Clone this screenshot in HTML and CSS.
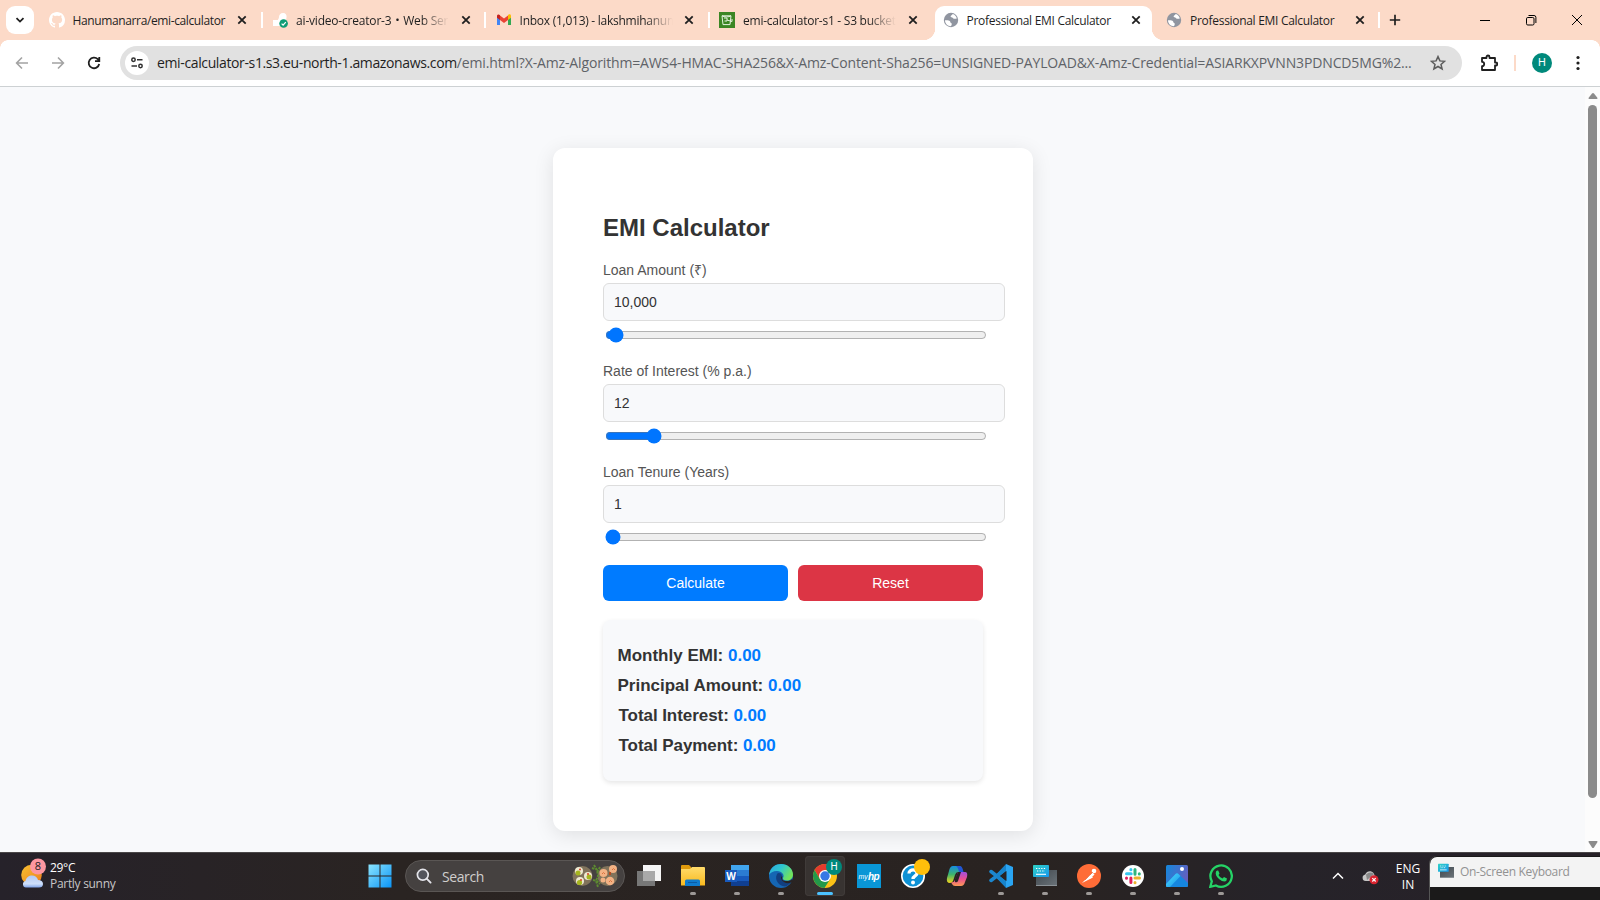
FILE: index.html
```html
<!DOCTYPE html>
<html lang="en">
<head>
<meta charset="utf-8">
<title>Professional EMI Calculator</title>
<link rel="stylesheet" href="styles.css">
</head>
<body>
<svg class="defs" width="0" height="0">
  <defs>
    <symbol id="x" viewBox="0 0 10 10"><path d="M1.3 1.3l7.4 7.4M8.7 1.3L1.3 8.7" stroke="#1f1f1f" stroke-width="1.8" fill="none"/></symbol>
    <symbol id="globe" viewBox="0 0 16 16"><circle cx="8" cy="8" r="7.2" fill="#9095a0"/><path d="M2 8.2c2 0 4.200-.2 5 1 .7 1 .2 1.900 1.600 2.100.4 1-.1 2-.6 2.900C4.500 14 2 11.500 2 8.200zM7 2.200l2.600-.3c-.2 1.300-1.900 1.200-2 2.300-.1 1.200 1.700.8 2.300 1.800.6.9 2 1 3.900.6-.3-2.300-2-4.200-4.200-4.700z" fill="#fff"/></symbol>
    <linearGradient id="win" x1="0" y1="0" x2="1" y2="1"><stop offset="0" stop-color="#8be5ff"/><stop offset="1" stop-color="#0a94f6"/></linearGradient>
    <linearGradient id="edge" x1="0" y1="0" x2="1" y2=".5"><stop offset="0" stop-color="#2da5e0"/><stop offset=".5" stop-color="#2ec6cf"/><stop offset="1" stop-color="#72e35b"/></linearGradient>
    <linearGradient id="sun" x1="0" y1="0" x2="1" y2="1"><stop offset="0" stop-color="#f7c331"/><stop offset="1" stop-color="#ee7a1c"/></linearGradient>
    <linearGradient id="cloud" x1="0" y1="0" x2="0" y2="1"><stop offset="0" stop-color="#b2c9f5"/><stop offset=".7" stop-color="#cfdffa"/><stop offset="1" stop-color="#7fa4ea"/></linearGradient>
    <linearGradient id="fold" x1="0" y1="0" x2="0" y2="1"><stop offset="0" stop-color="#ffdb6b"/><stop offset="1" stop-color="#f9b91e"/></linearGradient>
    <linearGradient id="copA" x1="0" y1="0" x2="0" y2="1"><stop offset="0" stop-color="#168ee0"/><stop offset=".5" stop-color="#3fb56c"/><stop offset="1" stop-color="#f2d51b"/></linearGradient>
    <linearGradient id="copB" x1="0" y1="0" x2="0" y2="1"><stop offset="0" stop-color="#a04fe0"/><stop offset=".5" stop-color="#ea4f91"/><stop offset="1" stop-color="#fb9b55"/></linearGradient>
    <linearGradient id="pho" x1="0" y1="0" x2="1" y2=".4"><stop offset="0" stop-color="#1388dc"/><stop offset="1" stop-color="#6260c0"/></linearGradient>
    <linearGradient id="mount" x1="0" y1="0" x2="1" y2="1"><stop offset="0" stop-color="#4fe0ff"/><stop offset="1" stop-color="#1590e8"/></linearGradient>
    <linearGradient id="kb" x1="0" y1="0" x2="1" y2="1"><stop offset="0" stop-color="#2fd3c4"/><stop offset="1" stop-color="#1796ee"/></linearGradient>
    <linearGradient id="kbb" x1="0" y1="0" x2="1" y2="1"><stop offset="0" stop-color="#40474d"/><stop offset="1" stop-color="#6b7379"/></linearGradient>
    <symbol id="osk" viewBox="0 0 24 24"><path d="M3 6h21v16H3z" fill="url(#kbb)"/><path d="M3 21h21v1H3z" fill="#8b9297"/><rect width="16" height="12" rx=".8" y="1" fill="url(#kb)"/><path d="M3 4.500h10M4 7h8" stroke="#fff" stroke-width="1.200" stroke-dasharray="1.300 1.300"/><path d="M3 10.300h10" stroke="#fff" stroke-width="1.100"/></symbol>
  </defs>
</svg>

<header class="tabstrip">
  <div class="search-tabs"><svg width="10" height="10" viewBox="0 0 10 10"><path d="M1.500 3.200L5 6.600l3.500-3.400" fill="none" stroke="#1f1f1f" stroke-width="1.800"/></svg></div>
  <div class="tab sep">
    <svg class="fav" viewBox="0 0 16 16"><path fill="#fff" d="M8 0C3.580 0 0 3.580 0 8c0 3.540 2.290 6.530 5.470 7.590.4.070.55-.17.55-.38v-1.490c-2.010.37-2.530-.49-2.690-.94-.09-.23-.48-.94-.82-1.130-.28-.15-.68-.52-.01-.53.63-.01 1.080.58 1.230.82.72 1.210 1.870.87 2.330.66.07-.52.28-.87.510-1.070-1.780-.2-3.640-.89-3.640-3.950 0-.87.310-1.590.82-2.150-.08-.2-.36-1.020.08-2.120 0 0 .67-.21 2.200.82.640-.18 1.320-.27 2-.27s1.360.09 2 .27c1.530-1.040 2.200-.82 2.200-.82.440 1.100.16 1.920.08 2.120.510.560.82 1.270.82 2.150 0 3.070-1.870 3.750-3.650 3.950.290.250.540.730.540 1.480v2.200c0 .21.150.46.550.38A8 8 0 0 0 16 8c0-4.420-3.580-8-8-8z"/></svg>
    <span class="title t1">Hanumanarra/emi-calculator</span><svg class="close"><use href="#x"/></svg>
  </div>
  <div class="tab sep">
    <svg class="fav" viewBox="0 0 16 16"><path fill="#fff" d="M1 14V8h5c0-1 1-1.500 1-3 0-2 1.500-4 4-4s4 2 3.500 4.500L13 14z"/><circle cx="11.600" cy="11.500" r="4.300" fill="#0f9d76"/><path d="M9.600 11.600l1.500 1.500 2.700-3" fill="none" stroke="#fff" stroke-width="1.200"/></svg>
    <span class="title t2 fade">ai-video-creator-3・Web Ser</span><svg class="close"><use href="#x"/></svg>
  </div>
  <div class="tab sep">
    <svg class="fav" viewBox="0 0 16 16"><path d="M1 4v9h3V7z" fill="#4285f4"/><path d="M12 7v6h3V4z" fill="#34a853"/><path d="M12 4v4l3-2.200V4c0-1.700-1.800-2.200-3-1z" fill="#fbbc04"/><path d="M4 3.500l4 3 4-3V8l-4 3-4-3z" fill="#ea4335"/><path d="M1 4v1.800L4 8V3.200C2.800 2 1 2.500 1 4z" fill="#c5221f"/></svg>
    <span class="title t3 fade">Inbox (1,013) - lakshmihanum</span><svg class="close"><use href="#x"/></svg>
  </div>
  <div class="tab">
    <svg class="fav" viewBox="0 0 16 16"><path fill="#3c8624" d="M0 0h16v16H0z"/><path d="M3 3.800h9l-1 8.800H4zM3 3.800c2 1.500 7 1.500 9 0M8 8l5 1.500V7M5 6h3v3H5.500" fill="none" stroke="#e5f3df" stroke-width="1"/></svg>
    <span class="title t4 fade">emi-calculator-s1 - S3 bucket</span><svg class="close"><use href="#x"/></svg>
  </div>
  <div class="tab active"><svg class="fav"><use href="#globe"/></svg><span class="title t5">Professional EMI Calculator</span><svg class="close"><use href="#x"/></svg></div>
  <div class="tab sep"><svg class="fav"><use href="#globe"/></svg><span class="title t5">Professional EMI Calculator</span><svg class="close"><use href="#x"/></svg></div>
  <svg class="plus" width="12" height="12" viewBox="0 0 12 12"><path d="M6 .8v10.400M.8 6h10.400" stroke="#1f1f1f" stroke-width="1.700"/></svg>
  <div class="winctl">
    <svg width="12" height="12" viewBox="0 0 12 12"><path d="M1 6.500h10" stroke="#000"/></svg>
    <svg width="12" height="12" viewBox="0 0 12 12"><rect x="1.500" y="3.500" width="7.500" height="7.500" rx="1.300" fill="none" stroke="#000"/><path d="M3.500 1.500H9A1.900 1.900 0 0 1 10.900 3.400V9" fill="none" stroke="#000"/></svg>
    <svg width="12" height="12" viewBox="0 0 12 12"><path d="M1 1l10 10M11 1L1 11" stroke="#000"/></svg>
  </div>
</header>

<nav class="toolbar">
  <svg class="nav" viewBox="0 0 16 16"><path d="M14 8H3M8 2.500L2.600 8 8 13.500" fill="none" stroke="#a3a3a3" stroke-width="1.600"/></svg>
  <svg class="nav" viewBox="0 0 16 16"><path d="M2 8h11M8 2.500L13.400 8 8 13.500" fill="none" stroke="#a3a3a3" stroke-width="1.600"/></svg>
  <svg class="nav" viewBox="0 0 16 16"><path d="M13.200 9A5.300 5.300 0 1 1 11.800 4.200L13.300 5.700M13.300 2v4.200H9" fill="none" stroke="#1f1f1f" stroke-width="1.800"/></svg>
  <div class="omnibox">
    <div class="site"><svg width="14" height="14" viewBox="0 0 14 14"><g fill="none" stroke="#303030" stroke-width="1.500"><circle cx="3.500" cy="3.800" r="1.700"/><path d="M7 3.800h5.500M1.500 10h5.500"/><circle cx="10.500" cy="10" r="1.700"/></g></svg></div>
    <div class="url"><span class="host">emi-calculator-s1.s3.eu-north-1.amazonaws.com</span><span class="path">/emi.html?X-Amz-Algorithm=AWS4-HMAC-SHA256&amp;X-Amz-Content-Sha256=UNSIGNED-PAYLOAD&amp;X-Amz-Credential=ASIARKXPVNN3PDNCD5MG%2...</span></div>
    <svg class="star" viewBox="0 0 16 16"><path d="M8 1.600l1.900 4.300 4.700.4-3.600 3.100 1.100 4.600L8 11.500 3.900 14 5 9.400 1.400 6.300l4.700-.4z" fill="none" stroke="#5c5c5c" stroke-width="1.500"/></svg>
  </div>
  <svg class="puzzle" viewBox="0 0 18 18"><path d="M2 4h4.500V3a1.500 1.500 0 0 1 3 0v1H15v4.500h.8a1.500 1.500 0 0 1 0 3H15V16H2v-3.800a2.200 2.200 0 0 0 0-4.400z" fill="none" stroke="#1f1f1f" stroke-width="1.800" stroke-linejoin="round"/></svg>
  <i class="bar"></i>
  <div class="avatar">H</div>
  <svg class="dots" width="4" height="16" viewBox="0 0 4 16"><g fill="#1f1f1f"><circle cx="2" cy="2.500" r="1.600"/><circle cx="2" cy="8" r="1.600"/><circle cx="2" cy="13.500" r="1.600"/></g></svg>
</nav>

<main class="page">
  <div class="content">
    <section class="card">
      <h2>EMI Calculator</h2>
      <div class="group"><label>Loan Amount (₹)</label><input class="text" type="text" value="10,000"><input class="range" type="range" min="1000" max="1000000" value="10000"></div>
      <div class="group"><label>Rate of Interest (% p.a.)</label><input class="text" type="text" value="12"><input class="range" type="range" min="1" max="100" value="12"></div>
      <div class="group"><label>Loan Tenure (Years)</label><input class="text" type="text" value="1"><input class="range" type="range" min="1" max="30" value="1"></div>
      <div class="buttons"><button class="calc">Calculate</button><button class="reset">Reset</button></div>
      <div class="result">
        <p>Monthly EMI: <span>0.00</span></p>
        <p>Principal Amount: <span>0.00</span></p>
        <p class="total">Total Interest: <span>0.00</span></p>
        <p class="total">Total Payment: <span>0.00</span></p>
      </div>
    </section>
  </div>
  <div class="scroll">
    <svg width="10" height="6" viewBox="0 0 10 6"><path d="M4 .6Q5-.4 6 .6L9.500 5Q9.700 6 8.700 6H1.300Q.3 6 .5 5z" fill="#8b8b8b"/></svg>
    <div class="thumb"></div>
    <svg width="10" height="7" viewBox="0 0 10 7"><path d="M4 6.400Q5 7.400 6 6.400L9.500 1Q9.700 0 8.700 0H1.300Q.3 0 .5 1z" fill="#8b8b8b"/></svg>
  </div>
</main>

<footer class="taskbar">
  <div class="weather">
    <svg width="26" height="31" viewBox="0 0 26 31"><circle cx="10.500" cy="17" r="10.300" fill="url(#sun)"/><path d="M5 29.500a3.300 3.300 0 0 1-.5-6.500C5 19.500 8 17.500 11 17.500s5.500 2 6 4.500c3 0 5 1.600 5 4s-1.500 3.500-4 3.500z" fill="url(#cloud)"/><circle cx="17" cy="8.500" r="8" fill="#fd97a1"/><text x="17" y="12.300" text-anchor="middle" class="count">8</text></svg>
    <div class="wtext"><div>29°C</div><div class="sunny">Partly sunny</div></div>
  </div>
  <div class="apps">
    <div class="start"><svg width="24" height="24" viewBox="0 0 24 24"><path d="M.5.500h11v11H.5zM12.500.500h11v11h-11zM.5 12.500h11v11H.5zM12.500 12.500h11v11h-11z" fill="url(#win)"/></svg></div>
    <div class="search">
      <svg width="16" height="16" viewBox="0 0 16 16"><circle cx="6.800" cy="6.800" r="5.400" fill="#53545c" stroke="#e4e4ea" stroke-width="1.700"/><path d="M10.700 10.700l3.900 3.900" stroke="#e4e4ea" stroke-width="1.900" stroke-linecap="round"/></svg>
      <span>Search</span>
      <svg class="food" width="46" height="26" viewBox="0 0 46 26"><circle cx="10.500" cy="13" r="10" fill="#81735b"/><circle cx="35.500" cy="13" r="10" fill="#81735b"/><g fill="#eee9d1"><circle cx="7" cy="8" r="4"/><circle cx="16" cy="13" r="4"/><circle cx="8" cy="18" r="4"/></g><g fill="#a5b51f"><circle cx="6" cy="10" r="2.500"/><circle cx="17" cy="14" r="2.500"/><circle cx="7.500" cy="19.500" r="2.600"/></g><g fill="#d64022"><circle cx="8" cy="6.500" r="1"/><circle cx="16" cy="11" r="1"/><circle cx="9" cy="17" r="1"/></g><path d="M22 2l3 5 1 6-2 5 2 6M20 5l6 2M28 4l-3 6M21 17l4 1 3 3" stroke="#5d8b30" stroke-width="1.900" stroke-dasharray="2.500 1" fill="none"/><g fill="#f3b284"><circle cx="31.500" cy="10" r="4"/><circle cx="41" cy="6" r="4"/><circle cx="38" cy="18" r="4.300"/><circle cx="31" cy="17" r="2.500"/></g><g fill="none" stroke="#d9713f"><path d="M30 11l1.500-1.500L33 11M40 7l1.500-1.500L43 7M37 19l1.500-1.500L40 19"/><path d="M38 12v-3" stroke="#b54a1d" stroke-width="2"/></g></svg>
    </div>
    <div class="app"><svg viewBox="0 0 24 24"><path d="M6 1h18v16H6z" fill="#f5f5f5"/><path d="M0 7h18v15H0z" fill="#777"/><path d="M6 7h12v10H6z" fill="#a9a9a9"/></svg></div>
    <div class="app run"><svg viewBox="0 0 24 24"><path d="M0 2q0-1 1-1h7l2 2v3H0z" fill="#e09a0c"/><path d="M0 5h9l2-2h12q1 0 1 1v17.500H0z" fill="url(#fold)"/><path d="M4 22v-5q0-1.500 1.500-1.500h12q1.500 0 1.500 1.500v5z" fill="#0f7bcd"/><path d="M7 18.500h9" stroke="#0a5ba5"/></svg></div>
    <div class="app run"><svg viewBox="0 0 24 24"><path d="M6 1h18v5H6z" fill="#41a5ee"/><path d="M6 6h18v6H6z" fill="#2b7cd3"/><path d="M6 12h18v5H6z" fill="#185abd"/><path d="M6 17h18v5H6z" fill="#103f91"/><path d="M0 6h12v12H0z" fill="#185abd"/><text x="6" y="15.500" text-anchor="middle" class="word">W</text></svg></div>
    <div class="app run"><svg viewBox="0 0 24 24"><circle cx="12" cy="12" r="12" fill="#1566b3"/><path d="M0 11C1 3 7 0 12 0c7 0 12 5 12 10.500 0 4-3 6-6 6s-4.500-1-4-2.500c2-3-1-7-6-7-4 0-7 2-8 4z" fill="url(#edge)"/><path d="M8 10c-3 6 2 12 8 12.500 2-.4 5-2.500 6-4.500-6 2.500-11-1-9-6 0-3-4-4-5-2z" fill="#123f80"/><path d="M13.500 12c-1 3 0 5 4 5 2.500 0 4.500-.5 5.500-2l1 1.500-1.500 1.800C17 21 11.500 17 12 13z" fill="#282323"/></svg></div>
    <div class="app run current"><svg viewBox="0 0 24 24"><circle cx="12" cy="12" r="12" fill="#fbc116"/><path d="M1.600 6A12 12 0 0 1 22.400 6H12L6.800 15z" fill="#e33b2e"/><path d="M1.600 6A12 12 0 0 0 11.500 24L17.200 15H6.800z" fill="#23994a"/><circle cx="12" cy="12" r="6" fill="#fff"/><circle cx="12" cy="12" r="4.700" fill="#3578e5"/></svg><b class="badge">H</b></div>
    <div class="app"><svg viewBox="0 0 24 24"><path fill="#0996d6" d="M0 0h24v24H0z"/><text x="1.500" y="14.500" class="my">my</text><text x="11" y="15.500" class="hp">hp</text></svg></div>
    <div class="app"><svg viewBox="0 0 24 24"><circle cx="12" cy="12" r="11.200" fill="#0d91d5" stroke="#fff" stroke-width="1.600"/><path d="M8 9.500C8 4.500 16.500 5 16 9.500c-.3 2.500-4 2.500-4 5.500" fill="none" stroke="#fff" stroke-width="3.300"/><circle cx="12" cy="18.500" r="2" fill="#fff"/></svg><b class="badge yellow"></b></div>
    <div class="app"><svg viewBox="0 0 24 24"><path d="M8 2h6q2 0 3 3l1 3h-5q-2 0-3 3l-2 6q-1 2-3 2-4 0-3-5L4 7q1-5 4-5z" fill="url(#copA)"/><path d="M11 2h4q2 0 3 4l.5 2H14q-1-5-3-6z" fill="#2156d4"/><path d="M16 22h-6q-2 0-3-2l-1-2q3 1 4-2l3-8h7q3 0 2 5l-2 5q-1 4-4 4z" fill="url(#copB)"/><path d="M10 15l3-7h3l-3 9q-1 2-3 1z" fill="#282323"/></svg></div>
    <div class="app run"><svg viewBox="0 0 24 24"><path d="M2 7.500L18 20M2 16.500L18 4" stroke="#1c87cf" stroke-width="3.500" stroke-linecap="round"/><path d="M17 0l7 3v18l-7 3z" fill="#2aa5f2"/><path d="M17 0v7l-6 5 6 5v7L8 14.500v-5z" fill="#1784cc"/><path d="M17.500 7v10L11 12z" fill="#282323"/></svg></div>
    <div class="app run"><svg><use href="#osk"/></svg></div>
    <div class="app run"><svg viewBox="0 0 24 24"><circle cx="12" cy="12" r="12" fill="#ff6c37"/><path d="M5 19l8-8 3 2.500z" fill="#fff"/><path d="M11.500 12.500l4-4 2 2-4 4z" fill="#fff"/><circle cx="17" cy="7" r="2.300" fill="#fff"/><path d="M8 16l8-8" stroke="#d95a2d" stroke-width=".6"/></svg></div>
    <div class="app run"><svg viewBox="0 0 24 24"><circle cx="12" cy="12" r="11" fill="#fff"/><g stroke-width="3" stroke-linecap="round"><path d="M5.500 9.700h4.700M9.900 5.500v.2" stroke="#36c5f0"/><path d="M14 5.500v4.700M18.300 9.700v.2" stroke="#2eb67d"/><path d="M9.900 14v4.500M5.500 14v.2" stroke="#e01e5a"/><path d="M14 14h4.500M14 18.500v.2" stroke="#ecb22e"/></g></svg></div>
    <div class="app run"><svg viewBox="0 0 24 24"><rect x="1" y="1" width="22" height="22" rx="1.500" fill="url(#pho)"/><path d="M1 20l9.500-10q1.500-1.500 3 0L23 19v2.500q0 1.500-1.500 1.500h-19Q1 23 1 21.500z" fill="#1686df"/><path d="M1 20l9.500-10q1.500-1.500 3 0l2 2L5 23H2.500Q1 23 1 21.500z" fill="url(#mount)"/><circle cx="17" cy="5" r="2" fill="#fff"/></svg></div>
    <div class="app run"><svg viewBox="0 0 24 24"><path d="M1.300 22.800l1.500-5.500A10.700 10.700 0 1 1 6.900 21.400z" fill="none" stroke="#25d366" stroke-width="2.300"/><path d="M7 7.500q1-1.500 2.200-1l1.300 3-1 1.500q1.300 2.600 4 3.600l1.500-1.500 3 1.400q0 2.500-2.500 3-2.500 0-5.500-2.500C7.500 13 6 10 7 7.500z" fill="#25d366"/></svg></div>
  </div>
  <div class="tray">
    <svg width="12" height="8" viewBox="0 0 12 8"><path d="M1 6.500l5-5 5 5" fill="none" stroke="#fff" stroke-width="1.500"/></svg>
    <svg width="17" height="15" viewBox="0 0 17 15"><path d="M3.500 11a3.300 3.300 0 0 1-.3-6.500C4.500 1 9 0 11.500 3L13 6l-5 5z" fill="#c5c5c5"/><path d="M4 4.500Q8 1 12 4L5 10z" fill="#888"/><circle cx="12" cy="9.800" r="4.500" fill="#d92430"/><path d="M10.300 8.100l3.400 3.400M13.700 8.100l-3.400 3.400" stroke="#fff" stroke-width="1.200"/></svg>
    <div class="lang"><div>ENG</div><div>IN</div></div>
  </div>
  <div class="keyboard"><div class="ktitle"><svg width="16" height="16"><use href="#osk"/></svg><span>On-Screen Keyboard</span></div></div>
</footer>
</body>
</html>
```
FILE: styles.css
```css
* { box-sizing: border-box; }
body { margin: 0; width: 1600px; height: 900px; overflow: hidden; display: flex; flex-direction: column; font-family: "Open Sans", "Noto Sans", "Noto Sans CJK JP", sans-serif; background: #f8f9fb; }
svg { display: block; flex: none; }
.defs { position: absolute; }

/* Tab strip */
.tabstrip { height: 40px; display: flex; background: #fcdac8; flex: none; }
.search-tabs { width: 28px; height: 28px; margin: 6px 6.600px 0 6px; border-radius: 9px; background: #fff; display: flex; align-items: center; justify-content: center; flex: none; }
.tab { position: relative; width: 223.500px; flex: none; display: flex; align-items: center; padding-left: 8px; }
.fav { width: 16px; height: 16px; margin-right: 8px; }
.title { width: 156px; flex: none; font-size: 12px; line-height: 18px; color: #1f1f1f; white-space: nowrap; padding-top: 1px; }
.fade { -webkit-mask-image: linear-gradient(90deg, #000 80%, transparent 98%); mask-image: linear-gradient(90deg, #000 80%, transparent 98%); }
.t1 { letter-spacing: -.38px; }
.t2 { letter-spacing: -.2px; }
.t3, .t4 { letter-spacing: -.26px; }
.t5 { letter-spacing: -.3px; }
.close { width: 10px; height: 10px; margin-left: 8.500px; }
.sep::after { content: ""; position: absolute; right: 1.500px; top: 12px; width: 2px; height: 16px; background: #fff; }
.active::before { content: ""; position: absolute; left: 0; top: 6px; width: 217px; height: 34px; background: #fff; border-radius: 9px 9px 0 0; }
.active::after { content: ""; position: absolute; left: -12px; bottom: 0; width: 241px; height: 12px; background: radial-gradient(circle at 0 0, transparent 12px, #fff 12.500px) left / 12px 12px no-repeat, radial-gradient(circle at 100% 0, transparent 12px, #fff 12.500px) right / 12px 12px no-repeat; }
.active > * { position: relative; z-index: 1; }
.plus { margin: 14px 0 0 7px; }
.winctl { display: flex; gap: 34px; margin: 14px 17px 0 auto; }

/* Toolbar, with rounded top corners over the strip colour */
.toolbar { height: 47px; flex: none; background: radial-gradient(circle at 100% 100%, #fff 7.500px, #fcdac8 8px) left top / 8px 8px no-repeat, radial-gradient(circle at 0 100%, #fff 7.500px, #fcdac8 8px) right top / 8px 8px no-repeat, #fff; border-bottom: 1px solid #cdd1d3; display: flex; align-items: center; padding-left: 14px; }
.nav { width: 16px; height: 16px; margin-right: 20px; }
.omnibox { width: 1342px; height: 34px; margin-left: -2px; background: #e1e1e1; border-radius: 17px; display: flex; align-items: center; flex: none; padding-left: 5px; }
.site { width: 24px; height: 24px; border-radius: 50%; background: #fff; display: flex; align-items: center; justify-content: center; }
.url { margin-left: 8px; width: 1260px; font-size: 14px; line-height: 20px; white-space: nowrap; color: #5f6368; flex: none; }
.host { color: #1f1f1f; letter-spacing: -.37px; }
.path { letter-spacing: -.14px; }
.star { width: 16px; height: 16px; margin-left: 13px; }
.puzzle { width: 18px; height: 18px; margin-left: 18px; }
.bar { width: 2px; height: 16px; background: #fcdac8; margin-left: 16px; }
.avatar { width: 20px; height: 20px; margin-left: 16px; border-radius: 50%; background: #00897b; color: #fff; font: 11px/20px Roboto, sans-serif; text-align: center; }
.dots { margin-left: 24px; }

/* Page */
.page { height: 765px; flex: none; display: flex; background: #f8f9fb; overflow: hidden; }
.content { flex: 1; padding-left: 553px; padding-top: 61px; font-family: "Liberation Sans", Arial, sans-serif; }
.card { width: 480px; height: 683px; background: #fff; border-radius: 12px; padding: 66px 50px 50px; box-shadow: 0 4px 20px rgba(0,0,0,.1); }
h2 { margin: 0 0 20px; font-size: 24px; line-height: 28px; color: #333; }
.group { height: 101px; }
label { display: block; font-size: 14px; line-height: 16px; color: #555; margin-bottom: 5px; }
.text { display: block; width: 402px; height: 38px; margin: 0; padding: 10px; border: 1px solid #ddd; border-radius: 6px; background: #f8f9fb; font: 14px "Liberation Sans", Arial, sans-serif; color: #333; }
.range { display: block; width: 382px; height: 16px; margin: 6px 0 0 2px; accent-color: #0075ff; }
.buttons { display: flex; gap: 10px; margin-top: 0; }
button { width: 185px; height: 36px; border: 0; border-radius: 6px; color: #fff; font: 14px "Liberation Sans", Arial, sans-serif; }
.calc { background: #007bff; }
.reset { background: #dc3545; }
.result { margin-top: 19px; width: 380px; height: 161px; border-radius: 8px; background: #f8f9fb; box-shadow: 0 2px 5px rgba(0,0,0,.1); padding: 21px 14.500px 19px; }
.result p { margin: 0; font-size: 17px; font-weight: bold; line-height: 30px; color: #333; }
.result span { color: #007bff; }
.result .total { padding-left: 1px; letter-spacing: -.06px; }
.scroll { width: 15px; background: #fcfcfc; display: flex; flex-direction: column; padding: 6px 0 0 3px; }
.thumb { width: 9px; height: 693px; margin: 6px 0 43px; background: #8b8b8b; border-radius: 5px; }

/* Taskbar */
.taskbar { height: 48px; flex: none; display: flex; background: linear-gradient(90deg, #26222a, #2a2422 25%, #292321 65%, #262329 80%, #272128); border-top: 1px solid #4a4748; color: #fff; }
.weather { width: 358px; padding: 5px 0 0 21px; display: flex; flex: none; }
.count { font: 11px "Open Sans", sans-serif; fill: #222; }
.wtext { margin-left: 3px; font-size: 12px; line-height: 16px; padding-top: 2px; letter-spacing: -.3px; }
.sunny { color: #c8c6c7; }
.apps { display: flex; align-items: flex-start; flex: none; }
.start { width: 47px; padding: 11px 0 0 10px; }
.search { width: 220px; height: 32px; margin: 7px 2px 0 0; border: 1px solid #5a5654; border-radius: 16px; background: #454140; display: flex; align-items: center; padding-left: 10px; font-size: 14px; color: #d0cecd; }
.search span { margin-left: 10px; letter-spacing: -.4px; }
.food { margin-left: auto; margin-right: 6px; }
.app { position: relative; width: 40px; height: 40px; margin: 3px 2px 0; padding: 8px; border-radius: 4px; flex: none; }
.app svg { width: 24px; height: 24px; }
.run::after { content: ""; position: absolute; left: 17px; bottom: 1px; width: 6px; height: 3px; border-radius: 2px; background: #9d9997; }
.current { background: #383331; box-shadow: inset 0 0 0 1px #403b39; }
.current::after { left: 12px; width: 16px; background: #4cc2ff; }
.badge { position: absolute; right: 3px; top: 3px; width: 16px; height: 16px; border-radius: 50%; background: #00897b; color: #fff; font: 10px/16px Roboto, sans-serif; text-align: center; }
.yellow { background: #ffbf0b; }
.word { font: bold 10px "Open Sans", sans-serif; fill: #fff; }
.my { font: italic 7px "Liberation Sans", sans-serif; fill: #fff; }
.hp { font: italic bold 10px "Liberation Sans", sans-serif; letter-spacing: -.5px; fill: #fff; }
.tray { flex: 1; display: flex; justify-content: flex-end; }
.tray > svg:first-child { margin: 19px 18px 0 0; }
.tray > svg:nth-child(2) { margin-top: 17px; }
.lang { width: 36px; margin: 8px 4px 0 11px; font-size: 12px; line-height: 16px; text-align: center; }
.keyboard { width: 171px; margin-top: 3px; margin-left: -1px; padding-top: 1px; background: #1b1a1a; border-left: 1px solid #555; border-radius: 8px 0 0 0; overflow: hidden; flex: none; }
.ktitle { height: 30px; background: #f3f3f3; border-radius: 7px 0 0 0; display: flex; padding: 6px 0 0 8px; font-size: 12px; line-height: 18px; color: #929292; }
.ktitle span { margin-left: 6px; white-space: nowrap; letter-spacing: -.32px; }
```
